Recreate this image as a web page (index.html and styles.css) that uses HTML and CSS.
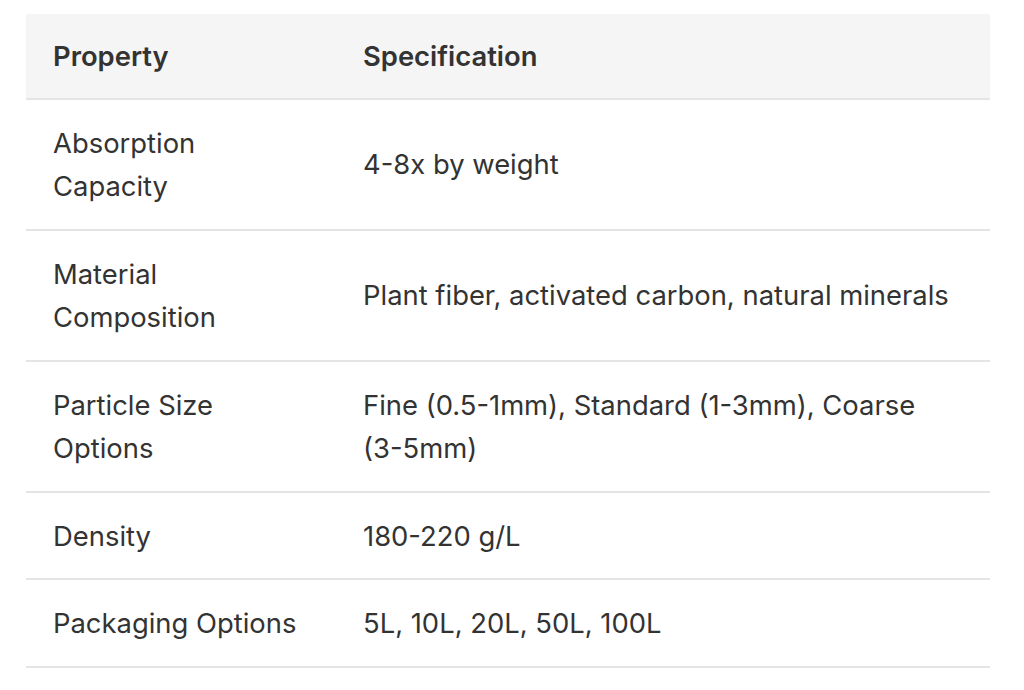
FILE: index.html
```html
<!DOCTYPE html>
<html>
<head>
<meta charset="utf-8">
<link rel="stylesheet" href="styles.css">
</head>
<body>
<table class="spec">
  <thead>
    <tr><th class="c1">Property</th><th>Specification</th></tr>
  </thead>
  <tbody>
    <tr><td>Absorption Capacity</td><td>4-8x by weight</td></tr>
    <tr><td>Material Composition</td><td>Plant fiber, activated carbon, natural minerals</td></tr>
    <tr><td>Particle Size Options</td><td>Fine (0.5-1mm), Standard (1-3mm), Coarse <span class="nw">(3-5mm)</span></td></tr>
    <tr><td>Density</td><td>180-220 g/L</td></tr>
    <tr><td>Packaging Options</td><td>5L, 10L, 20L, 50L, 100L</td></tr>
  </tbody>
</table>
</body>
</html>
```
FILE: styles.css
```css
html, body { margin: 0; padding: 0; background: #fff; }
body { padding: 14px 34px 0 26px; font-family: Inter, "Noto Sans", sans-serif; color: #333; }
.spec { width: 964px; border-collapse: collapse; font-size: 27.4px; line-height: 43.5px; }
.spec th, .spec td { text-align: left; vertical-align: middle; padding: 22px 27px 20px; border-bottom: 2px solid #e4e4e4; }
.spec th { background: #f5f5f5; font-weight: 600; padding-top: 21px; padding-bottom: 19px; }
.spec .c1 { width: 256px; }
.spec td { font-weight: 400; }
.nw { white-space: nowrap; }
```
